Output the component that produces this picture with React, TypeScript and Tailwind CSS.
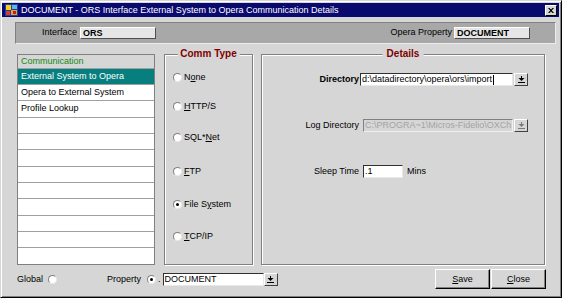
import React from "react";

function DropBtn({ disabled = false }: { disabled?: boolean }) {
  const c = disabled ? "#7a7a7a" : "#000";
  return (
    <div className="w-[14px] h-[13px] shrink-0 bg-[#d6d6d6] border border-t-white border-l-white border-r-[#404040] border-b-[#404040] flex items-center justify-center">
      <svg width="7" height="7" viewBox="0 0 7 7">
        <rect x="3" y="0" width="1" height="2" fill={c} />
        <path d="M0.5 2h6L3.5 5z" fill={c} />
        <rect x="0" y="6" width="7" height="1" fill={c} />
      </svg>
    </div>
  );
}

function Radio({ checked = false }: { checked?: boolean }) {
  return (
    <span className="relative flex w-[9px] h-[9px] shrink-0 rounded-full bg-white border border-t-[#808080] border-l-[#808080] border-r-[#e8e8e8] border-b-[#e8e8e8] items-center justify-center">
      {checked && <span className="w-[3px] h-[3px] rounded-full bg-black" />}
    </span>
  );
}

const rowHeights = [
  "h-[16px]",
  "h-[16px]",
  "h-[17px]",
  "h-[16px]",
  "h-[16px]",
  "h-[17px]",
  "h-[16px]",
  "h-[16px]",
  "h-[17px]",
  "h-[16px]",
  "h-[16px]",
  "h-[16px]",
];

const listItems = ["External System to Opera", "Opera to External System", "Profile Lookup"];

function RadioRow({ checked, children, mt }: { checked?: boolean; children: React.ReactNode; mt: string }) {
  return (
    <div className={`flex items-center h-[12px] ${mt}`}>
      <Radio checked={checked} />
      <span className="ml-[2px] leading-[12px]">{children}</span>
    </div>
  );
}

export default function App() {
  return (
    <div className="w-[562px] h-[298px] overflow-hidden bg-[#d6d6d6] border border-t-[#d6d6d6] border-l-[#d6d6d6] border-r-black border-b-black shadow-[inset_1px_1px_0_#ffffff,inset_-1px_-1px_0_#808080] flex flex-col font-['Liberation_Sans',Arial,sans-serif] text-[9px] text-black">
      {/* Title bar */}
      <div className="mt-[2px] ml-[1px] mr-[2px] h-[14px] bg-[#0a0a6e] flex items-center">
        <svg width="13" height="12" viewBox="0 0 13 12" className="ml-[3px]">
          <rect x="0" y="0" width="13" height="12" fill="#1c3fa8" />
          <rect x="1" y="1" width="5" height="5" fill="#f4d21a" />
          <rect x="7" y="1" width="5" height="4" fill="#59b8e8" />
          <rect x="1" y="7" width="4" height="4" fill="#e23a2a" />
          <rect x="6" y="6" width="6" height="5" fill="#f0a020" />
          <rect x="8" y="7" width="3" height="3" fill="#c02020" />
        </svg>
        <span className="ml-[3px] text-white leading-[14px] whitespace-nowrap">
          DOCUMENT - ORS Interface External System to Opera Communication Details
        </span>
        <div className="ml-auto mr-[2px] w-[12px] h-[11px] bg-[#d6d6d6] border border-t-white border-l-white border-r-black border-b-black flex items-center justify-center">
          <svg width="6" height="5" viewBox="0 0 6 5">
            <path d="M0 0h1.5L3 1.6 4.5 0H6L3.8 2.5 6 5H4.5L3 3.4 1.5 5H0l2.2-2.5z" fill="#000" />
          </svg>
        </div>
      </div>

      {/* Top bar */}
      <div className="mt-[5px] ml-[14px] mr-[5px] h-[22px] bg-[#a8a8a8] border border-t-[#808080] border-l-[#808080] border-b-[#ececec] border-r-[#ececec] flex items-center pl-[26px] pr-[25px]">
        <span>Interface</span>
        <div className="ml-[3px] w-[76px] h-[12px] bg-[#e6e6e6] border border-t-white border-l-white border-r-[#505050] border-b-[#505050] font-bold leading-[10px] pl-[2px]">
          ORS
        </div>
        <span className="ml-auto">Opera Property</span>
        <div className="ml-[2px] w-[76px] h-[12px] bg-[#e6e6e6] border border-t-white border-l-white border-r-[#505050] border-b-[#505050] font-bold leading-[10px] pl-[2px]">
          DOCUMENT
        </div>
      </div>

      {/* Main */}
      <div className="mt-[10px] ml-[16px] h-[211px] flex">
        {/* List */}
        <div className="w-[138px] h-[211px] border border-[#808080] bg-white flex flex-col">
          <div className="h-[14px] bg-[#d6d6d6] border-b border-[#a0a0a0] text-[#108a10] pl-[3px] leading-[13px]">
            Communication
          </div>
          {rowHeights.map((h, i) => {
            const text = listItems[i] ?? "";
            const sel = i === 0;
            return (
              <div
                key={i}
                className={`${h} border-b border-[#a0a0a0] last:border-b-0 pl-[3px] flex items-center ${
                  sel ? "bg-[#077f7f] text-white" : "bg-white text-black"
                }`}
              >
                {text}
              </div>
            );
          })}
        </div>

        {/* Comm Type */}
        <div className="relative ml-[9px] w-[89px] h-[211px] border border-[#808080] shadow-[inset_1px_1px_0_#ffffff,1px_1px_0_#ffffff] pl-[8px] flex flex-col">
          <div className="absolute left-1/2 -translate-x-1/2 top-[-7px] px-[3px] bg-[#d6d6d6] text-[10px] font-bold text-[#800000] leading-[12px] whitespace-nowrap">
            Comm Type
          </div>
          <RadioRow mt="mt-[16px]">
            N<u>o</u>ne
          </RadioRow>
          <RadioRow mt="mt-[17px]">
            <u>H</u>TTP/S
          </RadioRow>
          <RadioRow mt="mt-[19px]">
            SQL*<u>N</u>et
          </RadioRow>
          <RadioRow mt="mt-[22px]">
            <u>F</u>TP
          </RadioRow>
          <RadioRow mt="mt-[21px]" checked>
            File S<u>y</u>stem
          </RadioRow>
          <RadioRow mt="mt-[20px]">
            <u>T</u>CP/IP
          </RadioRow>
        </div>

        {/* Details */}
        <div className="relative ml-[8px] w-[284px] h-[211px] border border-[#808080] shadow-[inset_1px_1px_0_#ffffff,1px_1px_0_#ffffff] flex flex-col">
          <div className="absolute left-1/2 -translate-x-1/2 top-[-7px] px-[4px] bg-[#d6d6d6] text-[10px] font-bold text-[#800000] leading-[12px] whitespace-nowrap">
            Details
          </div>
          <div className="mt-[18px] flex items-center h-[13px]">
            <span className="w-[97px] text-right font-bold">Directory</span>
            <div className="ml-[1px] w-[153px] h-[13px] bg-white border border-t-[#303030] border-l-[#303030] border-r-[#e8e8e8] border-b-[#e8e8e8] flex items-center pl-[1px] overflow-hidden whitespace-nowrap">
              <span>d:\datadirectory\opera\ors\import</span>
              <span className="ml-[1px] w-[1px] h-[10px] bg-black" />
            </div>
            <div className="ml-[1px]">
              <DropBtn />
            </div>
          </div>
          <div className="mt-[33px] flex items-center h-[13px]">
            <span className="w-[97px] text-right">Log Directory</span>
            <div className="ml-[4px] w-[150px] h-[13px] bg-[#d6d6d6] border border-t-[#808080] border-l-[#808080] border-r-[#f0f0f0] border-b-[#f0f0f0] text-[#a4a4a4] flex items-center pl-[1px] overflow-hidden whitespace-nowrap">
              C:\PROGRA~1\Micros-Fidelio\OXCh
            </div>
            <div className="ml-[1px]">
              <DropBtn disabled />
            </div>
          </div>
          <div className="mt-[33px] flex items-center h-[13px]">
            <span className="w-[97px] text-right">Sleep Time</span>
            <div className="ml-[4px] w-[40px] h-[13px] bg-white border border-t-[#303030] border-l-[#303030] border-r-[#e8e8e8] border-b-[#e8e8e8] flex items-center pl-[1px]">
              .1
            </div>
            <span className="ml-[4px]">Mins</span>
          </div>
        </div>
      </div>

      {/* Bottom row */}
      <div className="mt-[4px] ml-[16px] mr-[15px] h-[20px] flex items-center leading-[11px]">
        <span>Global</span>
        <span className="ml-[5px]">
          <Radio />
        </span>
        <span className="ml-[50px]">Property</span>
        <span className="ml-[6px]">
          <Radio checked />
        </span>
        <span className="ml-[2px]">.</span>
        <div className="ml-[2px] w-[101px] h-[13px] bg-white border border-t-[#303030] border-l-[#303030] border-r-[#e8e8e8] border-b-[#e8e8e8] flex items-center pl-[1px]">
          DOCUMENT
        </div>
        <DropBtn />
        <div className="ml-auto flex">
          <button className="w-[55px] h-[20px] bg-[#d6d6d6] border border-t-white border-l-white border-r-black border-b-black shadow-[inset_-1px_-1px_0_#808080] text-[9px] flex items-center justify-center">
            <span>
              <u>S</u>ave
            </span>
          </button>
          <button className="ml-[1px] w-[55px] h-[20px] bg-[#d6d6d6] border border-t-white border-l-white border-r-black border-b-black shadow-[inset_-1px_-1px_0_#808080] text-[9px] flex items-center justify-center">
            <span>
              <u>C</u>lose
            </span>
          </button>
        </div>
      </div>
    </div>
  );
}
